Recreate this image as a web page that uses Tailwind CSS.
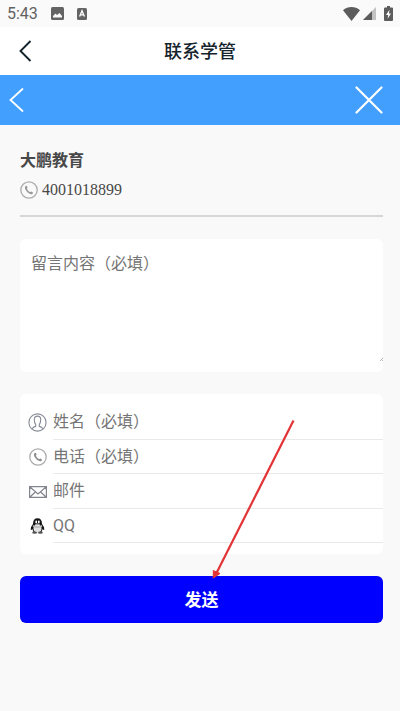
<!DOCTYPE html>
<html lang="zh-CN">
<head>
<meta charset="utf-8">
<meta name="viewport" content="width=device-width, initial-scale=1">
<title>联系学管</title>
<script src="https://cdn.jsdelivr.net/npm/@tailwindcss/browser@4"></script>
</head>
<body class="relative min-h-screen bg-[#f9f9f9] font-['Roboto','Noto_Sans_CJK_SC',sans-serif] text-[#444]">

  <!-- Status bar -->
  <div class="flex h-[27px] items-center bg-[#fafafa] pl-[7px] pr-[7px] text-[#626262]">
    <span class="text-[16px] leading-[27px]">5:43</span>
    <svg class="ml-[13px] h-[13px] w-[13px]" viewBox="0 0 13 13" aria-hidden="true"><rect width="13" height="13" rx="1.5" fill="#646464"/><path d="M2 10.5V9L4.5 6.5L6 8L8.500 6L11 9V10.500Z" fill="#fafafa"/></svg>
    <svg class="ml-[13px] h-[12px] w-[10px]" viewBox="0 0 10 12" aria-hidden="true"><rect width="10" height="12" rx="1.500" fill="#646464"/><path d="M2.600 8.500L5 2.800L7.400 8.500M3.500 6.800H6.500" fill="none" stroke="#fff" stroke-width="1.300"/></svg>
    <svg class="ml-auto h-[14px] w-[17px]" viewBox="0 0 17 14" aria-hidden="true"><path d="M0 3.200C4.800-1 12.200-1 17 3.200L8.500 14Z" fill="#5c5c5c"/></svg>
    <svg class="ml-[3px] h-[13px] w-[13px]" viewBox="0 0 13 13" aria-hidden="true"><path d="M13 0V13H0Z" fill="#c2c2c2"/><path d="M9 4V13H0Z" fill="#5c5c5c"/></svg>
    <svg class="ml-[8px] h-[15px] w-[9px]" viewBox="0 0 9 15" aria-hidden="true"><path d="M3 0H6V1.500H8Q9 1.500 9 2.500V14Q9 15 8 15H1Q0 15 0 14V2.500Q0 1.500 1 1.500H3Z" fill="#5c5c5c"/><path d="M5.500 3.800L2 9H4.200L3.600 12.800L7 7.500H4.900Z" fill="#fff"/></svg>
  </div>

  <!-- App title bar -->
  <header class="grid h-12 grid-cols-[48px_1fr_48px] items-center bg-white">
    <button type="button" aria-label="返回" class="flex h-12 items-center pl-[19px]">
      <svg class="h-[22px] w-[13px]" viewBox="0 0 13 22" fill="none" stroke="#15242c" stroke-width="1.900" aria-hidden="true"><path d="M11.500 1L1.500 11L11.500 21"/></svg>
    </button>
    <h1 class="pt-[2px] text-center text-[18px] font-medium leading-6 text-[#15242c]">联系学管</h1>
  </header>

  <!-- Page navigation -->
  <nav class="flex h-[50px] items-center justify-between bg-[#429ffe] pl-[9px] pr-[17px]">
    <button type="button" aria-label="后退">
      <svg class="h-6 w-[15px]" viewBox="0 0 15 24" fill="none" stroke="#fff" stroke-width="1.800" stroke-linecap="round" aria-hidden="true"><path d="M13.500 1L1.500 12L13.500 23"/></svg>
    </button>
    <button type="button" aria-label="关闭">
      <svg class="h-7 w-7" viewBox="0 0 28 28" fill="none" stroke="#fff" stroke-width="2.200" stroke-linecap="round" aria-hidden="true"><path d="M1.500 1.500L26.500 26.500M26.500 1.500L1.500 26.500"/></svg>
    </button>
  </nav>

  <main class="pl-5 pr-[17px] pt-6">
    <section class="border-b-2 border-[#d6d6d6] pb-[15px]">
      <h2 class="text-[16px] font-bold leading-6 text-[#484848]">大鹏教育</h2>
      <a href="tel:4001018899" class="mt-[7px] flex h-5 items-center gap-1 font-['Liberation_Serif',serif] text-[16px] leading-5 text-[#484848]">
        <svg class="h-[18px] w-[18px]" viewBox="0 0 18 18" fill="none" aria-hidden="true"><circle cx="9" cy="9" r="8.200" stroke="#acacac" stroke-width="1.300"/><path d="M5.200 5.500Q6.500 3.900 7.200 5.600Q8 7 6.900 7.700Q8 10.200 10.200 11.200Q11.200 9.900 12.300 10.900Q13.800 11.800 12.300 13Q10.600 14 7.700 11.500Q4.100 8 5.200 5.500Z" fill="#999"/></svg>
        <span>4001018899</span>
      </a>
    </section>

    <form>
      <div class="relative mt-[22px]">
        <textarea aria-label="留言内容" placeholder="留言内容（必填）" class="block h-[133px] w-full resize-none rounded-md bg-white px-[11px] py-[13px] text-[16px] leading-6 outline-none placeholder:text-[#757575]"></textarea>
        <svg class="absolute bottom-[11px] right-0 h-[3px] w-[3px]" viewBox="0 0 3 3" aria-hidden="true"><path d="M0 3L3 0M2 3L3 2" stroke="#999" stroke-width=".7"/></svg>
      </div>

      <div class="mt-[22px] flex h-40 flex-col rounded-md bg-white pb-[11px] pl-2 pt-[11px]">
        <div class="flex flex-1 items-stretch gap-[6px]">
          <label for="name" aria-label="姓名" class="flex w-[19px] items-center justify-center pt-px">
            <svg class="h-[19px] w-[19px]" viewBox="0 0 19 19" fill="none" stroke="#858b95" stroke-width="1.100" aria-hidden="true"><circle cx="9.500" cy="9.500" r="8.600"/><path d="M4.300 15.800Q4.700 14 7.700 13.400V11.600Q6.300 9.700 6.300 6.500Q6.300 3.100 9.500 3.100T12.700 6.500Q12.700 9.700 11.300 11.600V13.400Q14.300 14 14.700 15.800"/></svg>
          </label>
          <input id="name" type="text" placeholder="姓名（必填）" class="min-w-0 flex-1 border-b border-[#e9e9e9] pt-px text-[16px] outline-none placeholder:text-[#757575]">
        </div>
        <div class="flex flex-1 items-stretch gap-[6px]">
          <label for="phone" aria-label="电话" class="flex w-[19px] items-center justify-center pt-px">
            <svg class="h-[18px] w-[18px]" viewBox="0 0 18 18" fill="none" aria-hidden="true"><circle cx="9" cy="9" r="8.200" stroke="#acacac" stroke-width="1.300"/><path d="M5.200 5.500Q6.500 3.900 7.200 5.600Q8 7 6.900 7.700Q8 10.200 10.200 11.200Q11.200 9.900 12.300 10.900Q13.800 11.800 12.300 13Q10.600 14 7.700 11.500Q4.100 8 5.200 5.500Z" fill="#8c8c8c"/></svg>
          </label>
          <input id="phone" type="tel" placeholder="电话（必填）" class="min-w-0 flex-1 border-b border-[#e9e9e9] pt-px text-[16px] outline-none placeholder:text-[#757575]">
        </div>
        <div class="flex flex-1 items-stretch gap-[6px]">
          <label for="email" aria-label="邮件" class="flex w-[19px] items-center justify-center pt-px">
            <svg class="h-3 w-[18px]" viewBox="0 0 18 12" fill="none" stroke="#81868e" stroke-width="1.200" aria-hidden="true"><path d="M.6.600H17.400V11.400H.6ZM1 1L9 8L17 1M1 11L6.300 6M17 11L11.700 6"/></svg>
          </label>
          <input id="email" type="email" placeholder="邮件" class="min-w-0 flex-1 border-b border-[#e9e9e9] pt-px text-[16px] outline-none placeholder:text-[#757575]">
        </div>
        <div class="flex flex-1 items-stretch gap-[6px]">
          <label for="qq" aria-label="QQ" class="flex w-[19px] items-center justify-center pt-px">
            <svg class="h-4 w-[15px]" viewBox="0 0 15 16" aria-hidden="true"><path d="M3 6Q3 .3 7.500.3T12 6Q14.600 9 14.300 11.700Q13.700 12.300 12.700 11L11.500 14H3.500L2.300 11Q1.300 12.300.7 11.700Q.4 9 3 6Z" fill="#151515"/><ellipse cx="7.500" cy="10.500" rx="4" ry="4" fill="#e2e2e2"/><path d="M3 7Q7.500 9.800 12 7L12.200 8.800Q7.500 11 2.800 8.800Z" fill="#b9b9b9"/><ellipse cx="6.200" cy="3.900" rx=".9" ry="1.300" fill="#fff"/><ellipse cx="8.800" cy="3.900" rx=".9" ry="1.300" fill="#fff"/><ellipse cx="7.500" cy="6.200" rx="2.600" ry=".8" fill="#aaa"/><ellipse cx="4.600" cy="14.700" rx="2.500" ry="1.100" fill="#555"/><ellipse cx="10.400" cy="14.700" rx="2.500" ry="1.100" fill="#555"/></svg>
          </label>
          <input id="qq" type="text" placeholder="QQ" class="min-w-0 flex-1 border-b border-[#e9e9e9] pt-px text-[16px] outline-none placeholder:text-[#757575]">
        </div>
      </div>

      <button type="button" class="mt-[22px] block h-[47px] w-full rounded-md bg-[#0000fe] pt-[3px] text-[17px] font-bold text-white">发送</button>
    </form>
  </main>

  <!-- Arrow pointing at the send button -->
  <svg class="pointer-events-none absolute left-[212px] top-[419px] h-[160px] w-[84px]" viewBox="0 0 84 160" aria-hidden="true"><path d="M81.500 1.500L4 155" stroke="#e23436" stroke-width="2.200"/><path d="M1.300 159L1.300 151.500L8 154.500Z" fill="#e23436" stroke="#e23436"/></svg>
</body>
</html>
